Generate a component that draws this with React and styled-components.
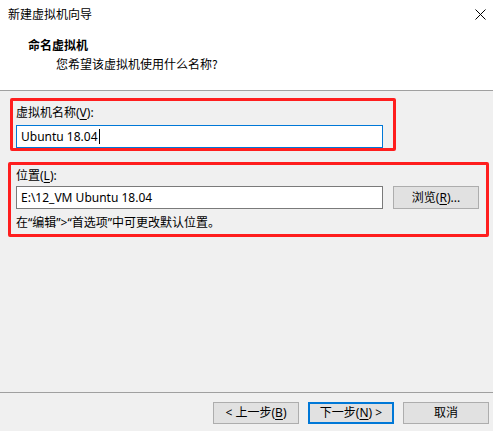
import React from "react";
import styled, { createGlobalStyle } from "styled-components";

const Global = createGlobalStyle`
  html, body { margin: 0; padding: 0; background: #f0f0f0; }
  body {
    font-family: "Noto Sans", "Noto Sans CJK SC", sans-serif;
    font-size: 12px;
    color: #000;
  }
`;

const Window = styled.div`
  width: 493px;
  height: 431px;
  display: flex;
  flex-direction: column;
  background: #f0f0f0;
  overflow: hidden;
`;

const Header = styled.header`
  height: 86px;
  flex: none;
  background: #fff;
  border-bottom: 1px solid #a0a0a0;
  padding-top: 4px;
  box-sizing: content-box;
  display: flex;
  flex-direction: column;
`;

const TitleBar = styled.div`
  height: 20px;
  line-height: 20px;
  padding: 0 7px 0 8px;
  display: flex;
  align-items: center;
  justify-content: space-between;
  font-family: "Noto Sans CJK SC", sans-serif;
`;

const CloseIcon = styled.svg`
  width: 11px;
  height: 11px;
  margin-top: 1px;
`;

const Heading = styled.div`
  margin: 12px 0 0 28px;
  line-height: 18px;
  font-weight: bold;
  font-family: "Noto Sans CJK SC", sans-serif;
`;

const Subtitle = styled.div`
  margin: 1px 0 0 56px;
  line-height: 18px;
  font-family: "Noto Sans CJK SC", sans-serif;
`;

const Body = styled.main`
  flex: 1;
  padding-top: 7px;
  display: flex;
  flex-direction: column;
  gap: 11px;
`;

const Group = styled.section`
  box-sizing: border-box;
  border: 3px solid #ff1e1e;
  border-radius: 2px;
  margin-left: ${(p) => p.$left}px;
  width: ${(p) => p.$width}px;
  padding-left: ${(p) => p.$padLeft}px;
  display: flex;
  flex-direction: column;
`;

const Label = styled.div`
  height: ${(p) => p.$h}px;
  line-height: ${(p) => p.$h}px;
  font-family: "Noto Sans", "Noto Sans CJK SC", sans-serif;
`;

const Mn = styled.span`
  text-decoration: underline;
  text-underline-offset: 2px;
`;

const Row = styled.div`
  display: flex;
  align-items: flex-start;
  gap: 10px;
`;

const TextField = styled.div`
  box-sizing: border-box;
  width: 367px;
  height: 23px;
  background: #fff;
  border: 1px solid ${(p) => (p.$focused ? "#0078d7" : "#7a7a7a")};
  padding-left: 4px;
  display: flex;
  align-items: center;
  line-height: 21px;
  white-space: pre;
`;

const Caret = styled.span`
  display: inline-block;
  width: 1px;
  height: 15px;
  background: #000;
  margin-left: 1px;
`;

const Hint = styled.div`
  padding-top: 6px;
  height: 25px;
  box-sizing: border-box;
  line-height: 16px;
  font-family: "Noto Sans", "Noto Sans CJK SC", sans-serif;
`;

const Button = styled.button`
  box-sizing: border-box;
  width: 86px;
  height: ${(p) => p.$h || 22}px;
  background: #e1e1e1;
  border: ${(p) => (p.$default ? "2px solid #0078d7" : "1px solid #adadad")};
  border-radius: 0;
  padding: 0;
  margin: 0;
  font-family: "Noto Sans", "Noto Sans CJK SC", sans-serif;
  font-size: 12px;
  color: #000;
  line-height: 18px;
  display: flex;
  align-items: center;
  justify-content: center;
`;

const Footer = styled.footer`
  height: 39px;
  flex: none;
  box-sizing: border-box;
  border-top: 1px solid #a0a0a0;
  padding: 9px 4px 0 0;
  display: flex;
  justify-content: flex-end;
  align-items: flex-start;
  gap: 9px;
`;

export default function App() {
  return (
    <Window>
      <Global />
      <Header>
        <TitleBar>
          <span>新建虚拟机向导</span>
          <CloseIcon viewBox="0 0 11 11">
            <path d="M0.5 0.5 L10.5 10.5 M10.5 0.5 L0.5 10.5" stroke="#000" strokeWidth="1" fill="none" />
          </CloseIcon>
        </TitleBar>
        <Heading>命名虚拟机</Heading>
        <Subtitle>您希望该虚拟机使用什么名称?</Subtitle>
      </Header>
      <Body>
        <Group $left={10} $width={386} $padLeft={3}>
          <Label $h={24}>
            虚拟机名称(<Mn>V</Mn>):
          </Label>
          <TextField $focused>
            Ubuntu 18.04
            <Caret />
          </TextField>
        </Group>
        <Group $left={8} $width={481} $padLeft={5}>
          <Label $h={21}>
            位置(<Mn>L</Mn>):
          </Label>
          <Row>
            <TextField>E:\12_VM Ubuntu 18.04</TextField>
            <Button $h={23}>
              浏览(<Mn>R</Mn>)...
            </Button>
          </Row>
          <Hint>在“编辑”&gt;“首选项”中可更改默认位置。</Hint>
        </Group>
      </Body>
      <Footer>
        <Button>
          &lt; 上一步(<Mn>B</Mn>)
        </Button>
        <Button $default>
          下一步(<Mn>N</Mn>) &gt;
        </Button>
        <Button>取消</Button>
      </Footer>
    </Window>
  );
}
